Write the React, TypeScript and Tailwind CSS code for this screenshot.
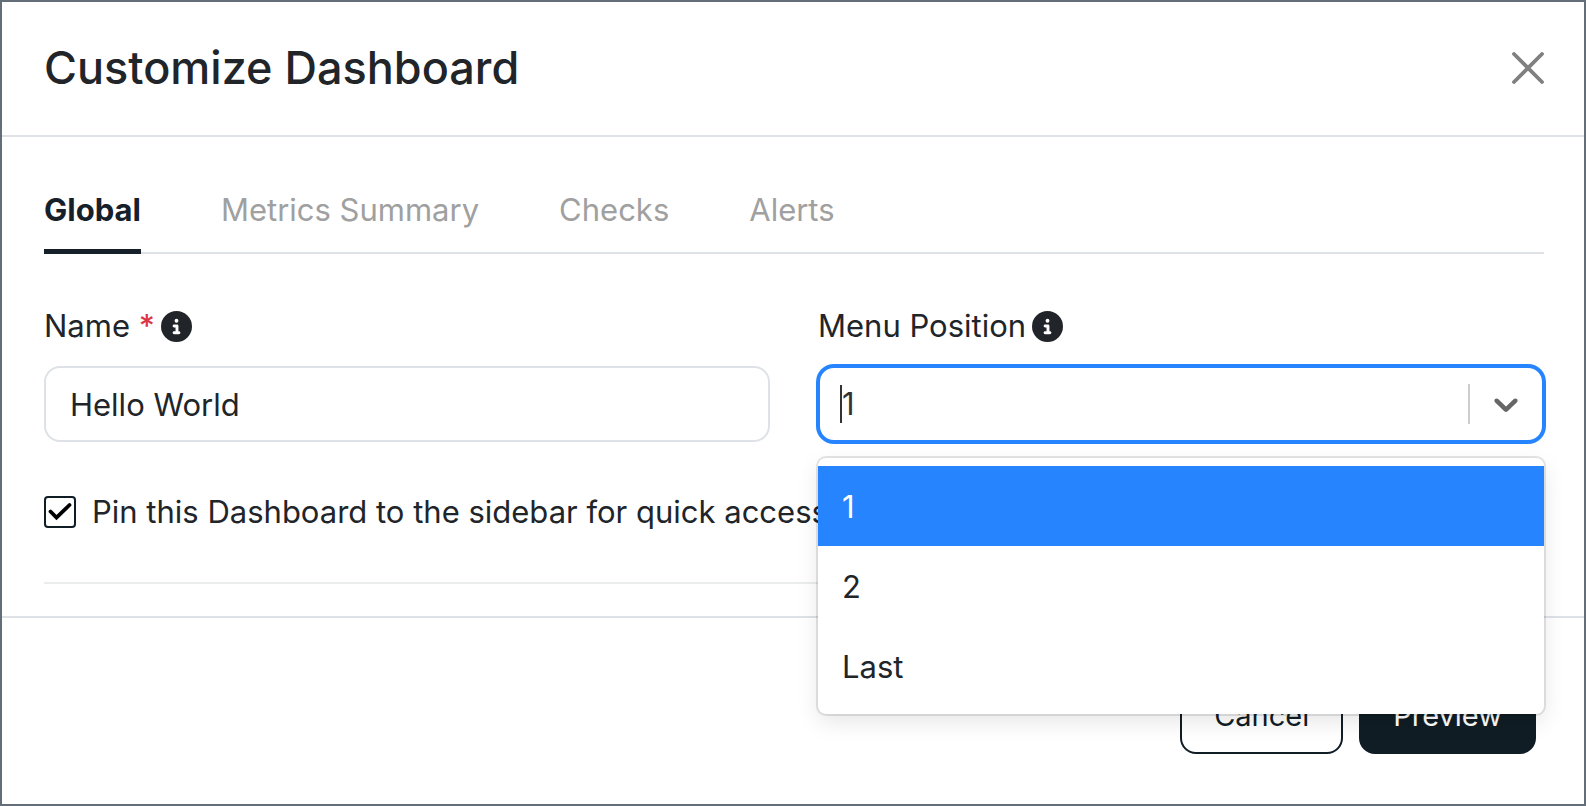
import { useState } from "react";
import { FaCircleInfo } from "react-icons/fa6";
import clsx from "clsx";

const tabs = ["Global", "Metrics Summary", "Checks", "Alerts"];
const positions = ["1", "2", "Last"];

function CloseIcon() {
  return (
    <svg viewBox="0 0 32 32" className="size-8" fill="none" aria-hidden="true">
      <path d="M2 2L30 30M30 2L2 30" stroke="currentColor" strokeWidth="3.8" strokeLinecap="round" />
    </svg>
  );
}

function ChevronIcon() {
  return (
    <svg viewBox="0 0 20 20" className="size-10" fill="currentColor" aria-hidden="true">
      <path d="M4.516 7.548c0.436-0.446 1.043-0.481 1.576 0l3.908 3.747 3.908-3.747c0.533-0.481 1.141-0.446 1.574 0 0.436 0.445 0.408 1.197 0 1.615-0.406 0.418-4.695 4.502-4.695 4.502-0.217 0.223-0.502 0.335-0.787 0.335s-0.57-0.112-0.789-0.335c0 0-4.287-4.084-4.695-4.502s-0.436-1.17 0-1.615z" />
    </svg>
  );
}

function PositionSelect() {
  const [value, setValue] = useState("1");
  const [open, setOpen] = useState(true);

  return (
    <div className="relative">
      <div className="flex h-[76px] items-center rounded-2xl border-2 border-[#2684ff] bg-white pl-5 shadow-[0_0_0_2px_#2684ff]">
        <span className="h-[38px] w-[2px] bg-[#333333]" />
        <input
          id="menu-position"
          role="combobox"
          aria-expanded={open}
          aria-controls="menu-position-list"
          readOnly
          value={value}
          onClick={() => setOpen(!open)}
          className="min-w-0 flex-1 text-[31px] text-[#333333] outline-none"
        />
        <span className="h-10 w-[2px] bg-[#cccccc]" />
        <button
          type="button"
          aria-label="Toggle menu positions"
          onClick={() => setOpen(!open)}
          className="px-4 text-[#666666]"
        >
          <ChevronIcon />
        </button>
      </div>

      {open && (
        <ul
          id="menu-position-list"
          role="listbox"
          aria-label="Menu Position"
          className="absolute inset-x-0 top-full z-10 mt-4 rounded-lg bg-white py-2 shadow-[0_0_0_2px_rgba(0,0,0,0.1),0_8px_22px_rgba(0,0,0,0.1)]"
        >
          {positions.map((position) => (
            <li
              key={position}
              role="option"
              aria-selected={position === value}
              onClick={() => {
                setValue(position);
                setOpen(false);
              }}
              className={clsx(
                "px-6 pt-[17px] pb-[15px] text-[31px] leading-[48px]",
                position === value ? "bg-[#2684ff] text-white" : "text-[#212529]"
              )}
            >
              {position}
            </li>
          ))}
        </ul>
      )}
    </div>
  );
}

export default function App() {
  const [activeTab, setActiveTab] = useState("Global");
  const [name, setName] = useState("Hello World");
  const [pinned, setPinned] = useState(true);

  return (
    <div
      role="dialog"
      aria-labelledby="dialog-title"
      className="flex min-h-screen flex-col border-2 border-[#646e79] bg-white font-['Inter',sans-serif] text-[31px] leading-[48px] text-[#212529]"
    >
      {/* Header */}
      <header className="flex items-center justify-between border-b-2 border-[#dee2e6] pt-9 pr-10 pb-[37px] pl-[42px]">
        <h1 id="dialog-title" className="text-[45px] leading-[60px] font-medium">
          Customize Dashboard
        </h1>
        <button type="button" aria-label="Close" className="text-[#808080]">
          <CloseIcon />
        </button>
      </header>

      {/* Body */}
      <main className="pt-[49px] pr-10 pb-8 pl-[42px]">
        <div role="tablist" className="flex gap-20 shadow-[inset_0_-2px_0_#dee2e6]">
          {tabs.map((tab) => (
            <button
              key={tab}
              type="button"
              role="tab"
              aria-selected={tab === activeTab}
              onClick={() => setActiveTab(tab)}
              className={clsx(
                "border-b-[5px] pb-[15px]",
                tab === activeTab
                  ? "border-[#16202a] font-bold text-[#16202a]"
                  : "border-transparent text-[#a0a0a0]"
              )}
            >
              {tab}
            </button>
          ))}
        </div>

        <div className="mt-12 grid grid-cols-2 gap-12">
          <div>
            <div className="mb-4 flex items-center gap-1.5">
              <label htmlFor="name">
                Name <span className="font-medium text-[#dc3545]">*</span>
              </label>
              <FaCircleInfo className="size-[31px]" />
            </div>
            <input
              id="name"
              type="text"
              value={name}
              onChange={(e) => setName(e.target.value)}
              className="h-[76px] w-full rounded-2xl border-2 border-[#dee2e6] px-6"
            />
          </div>
          <div>
            <div className="mb-4 flex items-center gap-1.5">
              <label htmlFor="menu-position">Menu Position</label>
              <FaCircleInfo className="size-[31px]" />
            </div>
            <PositionSelect />
          </div>
        </div>

        <div className="my-[46px] flex items-center gap-4">
          <span className="grid size-8 shrink-0">
            <input
              id="pin"
              type="checkbox"
              checked={pinned}
              onChange={(e) => setPinned(e.target.checked)}
              className="col-start-1 row-start-1 size-8 appearance-none rounded-sm border-2 border-[#101d25]"
            />
            {pinned && (
              <svg
                viewBox="0 0 32 32"
                className="pointer-events-none col-start-1 row-start-1 size-8"
                fill="none"
                aria-hidden="true"
              >
                <path
                  d="M6.5 15.5L12.5 21.5L25.5 9"
                  stroke="black"
                  strokeWidth="3.8"
                  strokeLinecap="round"
                  strokeLinejoin="miter"
                />
              </svg>
            )}
          </span>
          <label htmlFor="pin" className="whitespace-nowrap">
            Pin this Dashboard to the sidebar for quick access
          </label>
        </div>

        <hr className="border-t-2 border-[#ebecec]" />
      </main>

      {/* Footer */}
      <footer className="flex justify-end gap-4 border-t-2 border-[#dee2e6] px-12 pt-[60px] pb-[50px] text-[29px] leading-[44px]">
        <button type="button" className="rounded-2xl border-2 border-[#101d25] px-8 py-[14px] text-[#101d25]">
          Cancel
        </button>
        <button type="button" className="rounded-2xl border-2 border-[#101d25] bg-[#101d25] px-8 py-[14px] text-white">
          Preview
        </button>
      </footer>
    </div>
  );
}
